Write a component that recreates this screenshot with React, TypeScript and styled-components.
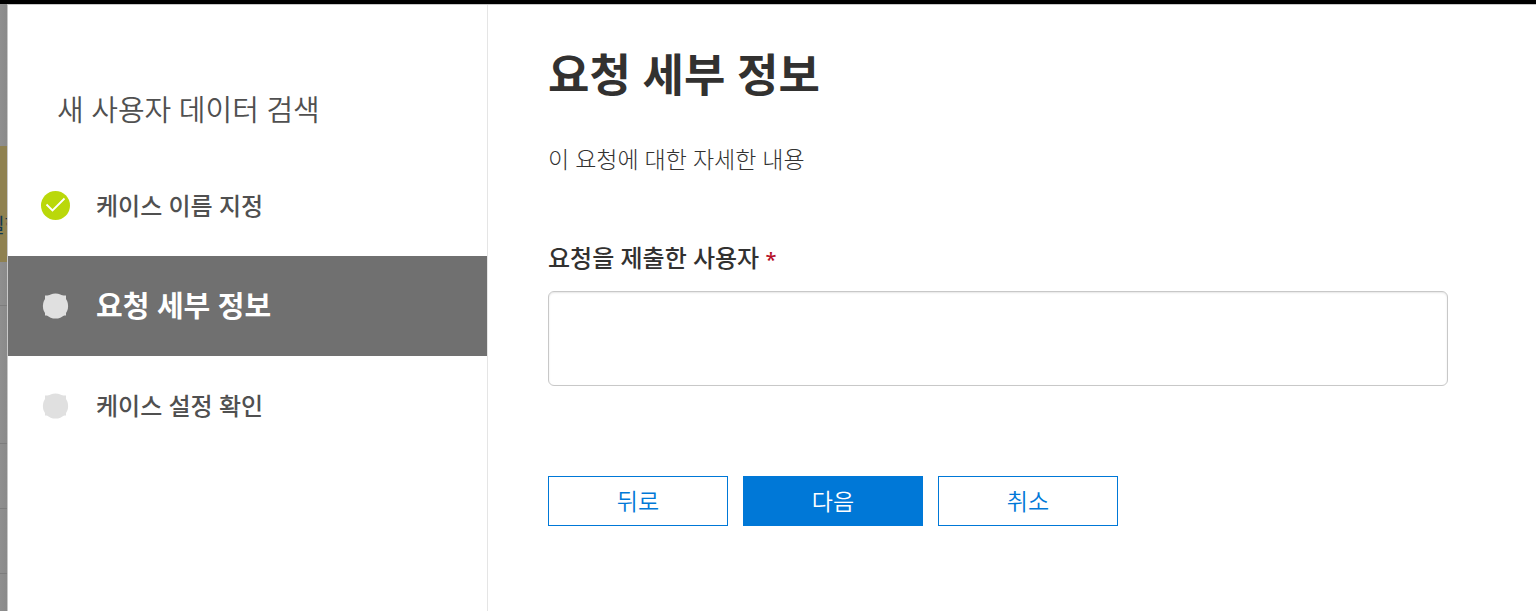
import React from "react";
import styled, { createGlobalStyle, css } from "styled-components";

const GlobalStyle = createGlobalStyle`
  *, *::before, *::after { box-sizing: border-box; }
  body {
    margin: 0;
    background: #fff;
    font-family: "Noto Sans", "Noto Sans CJK KR", sans-serif;
    color: #323130;
  }
  h1, h2, p, ol { margin: 0; padding: 0; }
`;

const Page = styled.div`
  display: flex;
  min-height: 100vh;
  border-top: 4px solid #000;
`;

const Backdrop = styled.div`
  flex: 0 0 7px;
  display: flex;
  flex-direction: column;
  overflow: hidden;
  background: linear-gradient(to right, #8f8f8f, #8a8a8a);
`;

const BackdropGap = styled.div`
  flex: 0 0 142px;
`;

const Notice = styled.div`
  flex: 0 0 116px;
  display: flex;
  align-items: center;
  justify-content: flex-end;
  padding-top: 44px;
  background: #8f8150;
  color: #12384f;
  font-size: 20px;
  line-height: 28px;
  white-space: nowrap;
`;

const NoticeText = styled.span`
  margin-right: -16px;
`;

const BackdropRow = styled.div<{ $height: number }>`
  flex: 0 0 ${(p) => p.$height}px;
  border-bottom: 1px solid #7d7d7d;
`;

const Panel = styled.div`
  flex: 1;
  display: flex;
  min-width: 0;
  border-top: 1px solid #c8c8c8;
  border-left: 1px solid #c8c8c8;
  background: #fff;
`;

const Sidebar = styled.nav`
  flex: 0 0 480px;
  border-right: 1px solid #e5e5e5;
  padding-top: 83px;
`;

const SidebarTitle = styled.h2`
  padding-left: 49px;
  font-size: 29px;
  line-height: 44px;
  font-weight: 350;
  color: #505050;
`;

const Steps = styled.ol`
  list-style: none;
  padding-top: 24px;
`;

const Step = styled.li<{ $active?: boolean }>`
  display: flex;
  align-items: center;
  gap: 26px;
  height: 100px;
  padding-left: 32px;
  font-size: 24px;
  line-height: 36px;
  font-weight: 500;
  color: #505050;
  ${(p) =>
    p.$active &&
    css`
      background: #707070;
      color: #fff;
      font-size: 29px;
      font-weight: 700;
    `}
`;

const StepIcon = styled.svg`
  flex: none;
  width: 30px;
  height: 30px;
`;

const Main = styled.main`
  flex: 1;
  min-width: 0;
  padding: 36px 60px;
`;

const Title = styled.h1`
  font-size: 45px;
  line-height: 68px;
  font-weight: 700;
`;

const Description = styled.p`
  margin-top: 32px;
  font-size: 23px;
  line-height: 36px;
  font-weight: 300;
`;

const Form = styled.form`
  margin-top: 63px;
`;

const Label = styled.label`
  display: block;
  font-size: 24px;
  line-height: 36px;
  font-weight: 500;
`;

const Required = styled.span`
  color: #b5122b;
  font-size: 20px;
  line-height: 20px;
`;

const TextArea = styled.textarea`
  display: block;
  width: 100%;
  max-width: 900px;
  height: 95px;
  margin-top: 15px;
  padding: 12px 16px;
  border: 1px solid #c8c8c8;
  border-radius: 6px;
  box-shadow: inset 0 1px 2px rgba(0, 0, 0, 0.1);
  background: #fff;
  font: inherit;
  font-size: 23px;
  resize: none;
`;

const Actions = styled.div`
  display: flex;
  gap: 15px;
  margin-top: 90px;
`;

const Button = styled.button<{ $primary?: boolean }>`
  width: 180px;
  height: 50px;
  padding: 0;
  border: 1px solid #0078d7;
  background: ${(p) => (p.$primary ? "#0078d7" : "#fff")};
  color: ${(p) => (p.$primary ? "#fff" : "#0078d7")};
  font-family: inherit;
  font-size: 23px;
  line-height: 36px;
  font-weight: 350;
`;

function DoneIcon() {
  return (
    <StepIcon viewBox="0 0 30 30" aria-hidden="true">
      <circle cx="15.5" cy="14.5" r="14.5" fill="#bad80a" />
      <path d="M6.5 13.5 L12.5 19.5 L24.5 7.5" fill="none" stroke="#fff" strokeWidth="1.8" />
    </StepIcon>
  );
}

function PendingIcon() {
  return (
    <StepIcon viewBox="0 0 30 30" aria-hidden="true">
      <circle cx="15.5" cy="15" r="12.6" fill="#e0e0e0" />
      <path d="M5 4.5H10V8H5ZM21 4.5H26V8H21ZM5 21H9V24.5H5ZM22 21H26V24.5H22Z" fill="#e0e0e0" />
    </StepIcon>
  );
}

export default function App() {
  return (
    <>
      <GlobalStyle />
      <Page>
        <Backdrop aria-hidden="true">
          <BackdropGap />
          <Notice>
            <NoticeText>필한</NoticeText>
          </Notice>
          <BackdropRow $height={44} />
          <BackdropRow $height={138} />
          <BackdropRow $height={65} />
          <BackdropRow $height={65} />
        </Backdrop>
        <Panel>
          <Sidebar>
            <SidebarTitle>새 사용자 데이터 검색</SidebarTitle>
            <Steps>
              <Step>
                <DoneIcon />
                케이스 이름 지정
              </Step>
              <Step $active aria-current="step">
                <PendingIcon />
                요청 세부 정보
              </Step>
              <Step>
                <PendingIcon />
                케이스 설정 확인
              </Step>
            </Steps>
          </Sidebar>
          <Main>
            <Title>요청 세부 정보</Title>
            <Description>이 요청에 대한 자세한 내용</Description>
            <Form onSubmit={(e) => e.preventDefault()}>
              <Label htmlFor="requester">
                요청을 제출한 사용자 <Required>*</Required>
              </Label>
              <TextArea id="requester" required />
              <Actions>
                <Button type="button">뒤로</Button>
                <Button type="submit" $primary>
                  다음
                </Button>
                <Button type="button">취소</Button>
              </Actions>
            </Form>
          </Main>
        </Panel>
      </Page>
    </>
  );
}
